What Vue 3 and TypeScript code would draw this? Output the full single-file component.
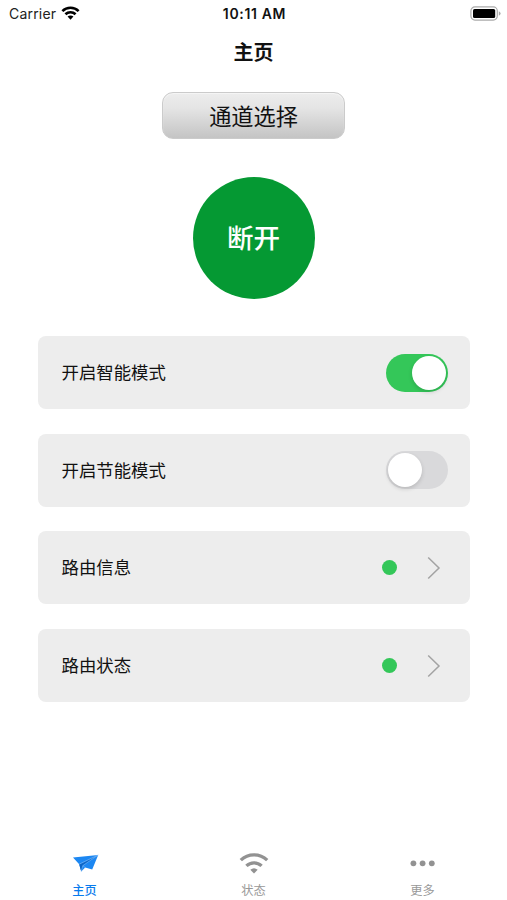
<script setup lang="ts">
import { reactive, ref } from 'vue'

interface SwitchRow {
  label: string
  on: boolean
}

const switches = reactive<SwitchRow[]>([
  { label: '开启智能模式', on: true },
  { label: '开启节能模式', on: false },
])
const links: string[] = ['路由信息', '路由状态']

type TabId = 'home' | 'status' | 'more'
const tabs: { id: TabId; label: string }[] = [
  { id: 'home', label: '主页' },
  { id: 'status', label: '状态' },
  { id: 'more', label: '更多' },
]
const active = ref<TabId>('home')
</script>

<template>
  <div class="screen">
    <header class="status">
      <div class="carrier">
        <span>Carrier</span>
        <svg width="19" height="14" viewBox="0 0 28 21">
          <path d="M1.8 7.6a17.4 17.4 0 0 1 24.4 0M6.4 12.4a10.8 10.8 0 0 1 15.2 0" fill="none" stroke="#000" stroke-width="3.9" />
          <path d="M9.6 15.9a6.2 6.2 0 0 1 8.8 0L14 20.6z" fill="#000" />
        </svg>
      </div>
      <span class="time">10:11 AM</span>
      <svg class="battery" width="31" height="15" viewBox="0 0 31 15">
        <rect x=".9" y=".9" width="26.4" height="13.2" rx="4" fill="#fff" stroke="#aaa" stroke-width="1.2" />
        <rect x="3" y="3" width="22.2" height="9" rx="1.6" fill="#000" />
        <path d="M28.8 5.3q1.8 .8 1.8 2.2t-1.8 2.2z" fill="#aaa" />
      </svg>
    </header>
    <h1 class="title">主页</h1>
    <button class="channel">通道选择</button>
    <button class="power">断开</button>

    <main class="cards">
      <section v-for="row in switches" :key="row.label" class="card">
        <span class="label">{{ row.label }}</span>
        <button class="switch" :class="{ on: row.on }" role="switch" :aria-checked="row.on" @click="row.on = !row.on">
          <span class="knob"></span>
        </button>
      </section>
      <section v-for="label in links" :key="label" class="card">
        <span class="label">{{ label }}</span>
        <span class="dot"></span>
        <svg class="chevron" width="14" height="24" viewBox="0 0 14 24">
          <path d="M1.2 1.5 12 12 1.2 22.5" fill="none" stroke="#a3a3a3" stroke-width="1.5" />
        </svg>
      </section>
    </main>

    <nav class="tabs">
      <button v-for="tab in tabs" :key="tab.id" class="tab" :class="{ active: active === tab.id }" @click="active = tab.id">
        <svg v-if="tab.id === 'home'" width="30" height="26" viewBox="0 0 30 26">
          <path d="M3 7.6 28.2 5 22.2 19.6 15.2 17.6 11.2 21.6 9.2 14.2z" fill="#1c87f2" />
          <path d="M28.2 5 9.2 14.2l2 7.4 1.6-6z" fill="#0b66c8" />
          <path d="M28.2 5 9.2 14.2" fill="none" stroke="#8fc5fb" stroke-width=".6" />
          <path d="M28.2 5 12.8 15.6l-1.6 6M12.8 15.6l2.4 2" fill="none" stroke="#8fc5fb" stroke-width=".5" />
        </svg>
        <svg v-else-if="tab.id === 'status'" width="30" height="26" viewBox="0 0 30 26">
          <path d="M1.8 10.2a18.8 18.8 0 0 1 26.4 0M7.4 15.9a10.9 10.9 0 0 1 15.2 0" fill="none" stroke="#929292" stroke-width="3.3" />
          <path d="M11.3 19.8a5.6 5.6 0 0 1 7.4 0L15 23.5z" fill="#929292" />
        </svg>
        <svg v-else width="30" height="26" viewBox="0 0 30 26">
          <g fill="#929292"><circle cx="5.4" cy="13.3" r="2.9" /><circle cx="14.6" cy="13.3" r="2.9" /><circle cx="23.8" cy="13.3" r="2.9" /></g>
        </svg>
        <span>{{ tab.label }}</span>
      </button>
    </nav>
  </div>
</template>

<style>
body {
  background: #fff;
}
</style>

<style scoped>
.screen {
  width: 507px;
  height: 900px;
  display: flex;
  flex-direction: column;
  align-items: center;
  background: #fff;
  color: #111;
  font-family: Inter, "Noto Sans CJK SC", sans-serif;
  overflow: hidden;
}
button {
  padding: 0;
  border: 0;
  font-family: inherit;
  color: inherit;
  background: none;
}
.status {
  width: 100%;
  height: 28px;
  box-sizing: border-box;
  padding: 0 6px 1px 9px;
  display: grid;
  grid-template-columns: 1fr auto 1fr;
  align-items: center;
  font-size: 14px;
}
.carrier {
  display: flex;
  align-items: center;
  gap: 5px;
  letter-spacing: .2px;
  color: #222;
}
.carrier svg {
  margin-top: -1px;
}
.time {
  font-size: 14px;
  font-weight: 600;
  letter-spacing: .65px;
  margin-right: 1px;
}
.battery {
  justify-self: end;
}
.title {
  margin: 9px 0 0;
  height: 30px;
  line-height: 30px;
  font-size: 20px;
  font-weight: 700;
  font-family: "Noto Sans CJK SC", sans-serif;
}
.channel {
  margin-top: 25px;
  width: 183px;
  height: 47px;
  flex: none;
  box-sizing: border-box;
  padding-bottom: 2px;
  border: 1px solid #cbcbcb;
  border-radius: 11px;
  background: linear-gradient(#ededed 0%, #e4e4e4 35%, #c9c9c9 90%, #c4c4c4 100%);
  box-shadow: inset 0 1px 1px #f5f5f5;
  font-size: 22.2px;
}
.power {
  margin-top: 38px;
  width: 122px;
  height: 122px;
  flex: none;
  padding-bottom: 3px;
  border-radius: 50%;
  background: #059933;
  color: #fff;
  font-size: 26.5px;
  font-weight: 500;
}
.cards {
  width: 432px;
  margin-top: 37px;
  display: flex;
  flex-direction: column;
  gap: 24.7px;
}
.card {
  height: 73px;
  box-sizing: border-box;
  padding: 0 22px 0 24px;
  display: flex;
  align-items: center;
  border-radius: 8px;
  background: #ededed;
}
.label {
  flex: 1;
  padding-bottom: 2px;
  font-size: 17.4px;
}
.switch {
  width: 62px;
  height: 38px;
  padding: 2px;
  display: flex;
  border-radius: 19px;
  background: #d9d9db;
}
.switch.on {
  justify-content: flex-end;
  background: #34c759;
}
.knob {
  width: 34px;
  height: 34px;
  border-radius: 50%;
  background: #fff;
  box-shadow: 0 2px 4px rgba(0, 0, 0, .15);
}
.dot {
  width: 15px;
  height: 15px;
  border-radius: 50%;
  background: #34c759;
}
.chevron {
  margin: 0 7px 0 30px;
}
.tabs {
  width: 100%;
  margin-top: auto;
  padding-bottom: 1px;
  display: grid;
  grid-template-columns: repeat(3, 1fr);
}
.tab {
  height: 49px;
  display: flex;
  flex-direction: column;
  align-items: center;
  gap: 6px;
  font-size: 12.2px;
  line-height: 17px;
  color: #999;
}
.tab.active {
  color: #087bed;
  font-weight: 500;
}
</style>
